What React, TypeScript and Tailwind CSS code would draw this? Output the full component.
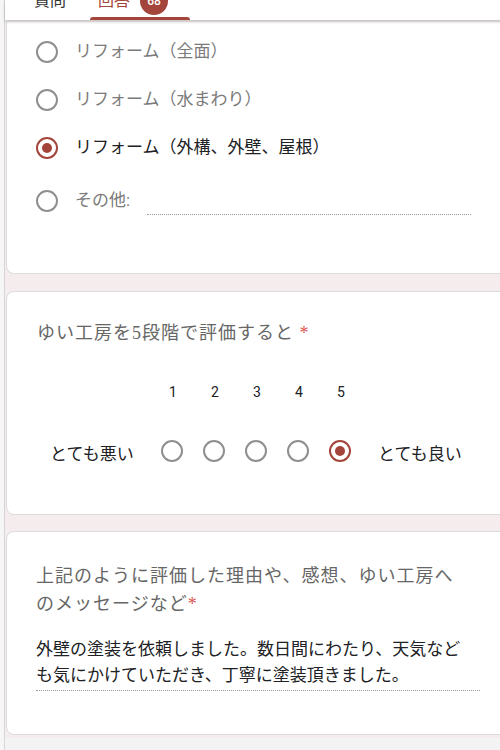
const sans = "font-['Roboto','Noto_Sans_CJK_JP',sans-serif]"

function Radio({ checked = false }: { checked?: boolean }) {
	return checked ? (
		<span className="flex h-[22px] w-[22px] shrink-0 items-center justify-center rounded-full border-2 border-[#a3453a]">
			<span className="h-[10px] w-[10px] rounded-full bg-[#a3453a]" />
		</span>
	) : (
		<span className="h-[22px] w-[22px] shrink-0 rounded-full border-2 border-[#8f8f8f]" />
	)
}

const options = [
	{ label: "リフォーム（全面）", checked: false },
	{ label: "リフォーム（水まわり）", checked: false },
	{ label: "リフォーム（外構、外壁、屋根）", checked: true },
]

export default function App() {
	return (
		<div className={`h-[750px] w-[500px] overflow-hidden bg-[#f6f6f6] pl-[4px] ${sans}`}>
			<div className="flex h-full w-[520px] flex-col border-l border-[#d6d6d6] bg-[#f4eced]">
				{/* tab header */}
				<div className="relative z-10 h-[20px] shrink-0 overflow-hidden bg-white shadow-[0_2px_3px_rgba(0,0,0,0.18)]">
					<div className="mt-[-13px] flex items-center pl-[29px] text-[16px]">
						<span className="text-[#333]">質問</span>
						<div className="relative ml-[26px] flex w-[100px] items-center gap-[10px] pl-[6px]">
							<span className="text-[#a3453a]">回答</span>
							<span className="flex h-[28px] w-[28px] items-center justify-center rounded-full bg-[#a3453a] text-[12px] font-medium text-white">
								68
							</span>
						</div>
					</div>
					<div className="absolute bottom-0 left-[85px] h-[3px] w-[100px] rounded-t-[3px] bg-[#a3453a]" />
				</div>

				{/* card 1 */}
				<div className="ml-[1px] mt-[2px] rounded-b-lg border border-t-0 border-[#dcdcdc] bg-white pb-[48px] pl-[29px] pt-[6px]">
					{options.map((o) => (
						<div key={o.label} className="flex h-[48px] items-center gap-[17px]">
							<Radio checked={o.checked} />
							<span className={`text-[17px] ${o.checked ? "text-[#202124]" : "text-[#7b7b7b]"}`}>
								{o.label}
							</span>
						</div>
					))}
					<div className="mt-[5px] flex h-[48px] items-center gap-[17px]">
						<Radio />
						<span className="text-[17px] text-[#7b7b7b]">その他:</span>
						<div className="ml-[0px] mt-[26px] h-0 w-[324px] border-b border-dotted border-[#9a9a9a]" />
					</div>
				</div>

				{/* card 2 */}
				<div className="ml-[1px] mt-[17px] h-[224px] rounded-lg border border-[#dcdcdc] bg-white pl-[30px] pt-[28px]">
					<div className="font-['Liberation_Serif','Noto_Sans_CJK_JP',serif] text-[18px] tracking-[1px] text-[#666]">
						ゆい工房を5段階で評価すると <span className="text-[#d9534f]">*</span>
					</div>
					<div className="ml-[125px] mt-[35px] flex gap-[20px] text-[14px] text-[#202124]">
						{[1, 2, 3, 4, 5].map((n) => (
							<span key={n} className="w-[22px] text-center">
								{n}
							</span>
						))}
					</div>
					<div className="mt-[31px] flex items-center">
						<span className="ml-[13px] mt-[8px] w-[105px] text-[17px] text-[#202124]">とても悪い</span>
						<div className="ml-[6px] flex gap-[20px]">
							{[1, 2, 3, 4, 5].map((n) => (
								<Radio key={n} checked={n === 5} />
							))}
						</div>
						<span className="ml-[27px] mt-[8px] text-[17px] text-[#202124]">とても良い</span>
					</div>
				</div>

				{/* card 3 */}
				<div className="ml-[1px] mt-[16px] h-[204px] rounded-lg border border-[#dcdcdc] bg-white pl-[29px] pt-[30px]">
					<div className="w-[432px] font-['Liberation_Serif','Noto_Sans_CJK_JP',serif] text-[18px] leading-[28px] tracking-[1px] text-[#666]">
						上記のように評価した理由や、感想、ゆい工房へのメッセージなど
						<span className="text-[#d9534f]">*</span>
					</div>
					<div className="mt-[18px] w-[444px] border-b border-dotted border-[#9a9a9a] pb-[2px] pr-[8px] text-[17px] leading-[26px] text-[#202124]">
						外壁の塗装を依頼しました。数日間にわたり、天気なども気にかけていただき、丁寧に塗装頂きました。
					</div>
				</div>
				<div className="mt-[3px] flex-1 bg-[#f3f3f3]" />
			</div>
		</div>
	)
}
